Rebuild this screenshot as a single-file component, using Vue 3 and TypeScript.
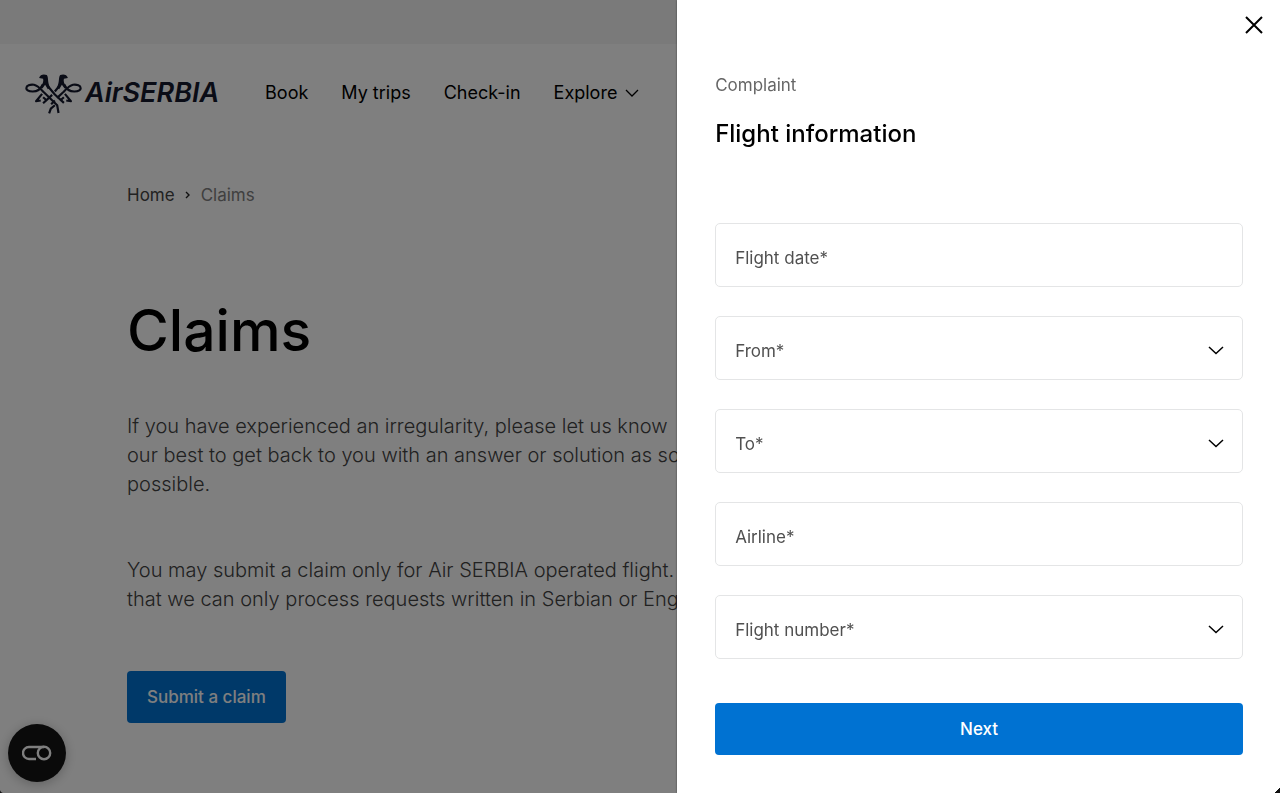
<script setup lang="ts">
import { ref } from 'vue'

interface Field {
  id: string
  label: string
  kind: 'text' | 'select'
}

const navItems: string[] = ['Book', 'My trips', 'Check-in']

const fields: Field[] = [
  { id: 'flight-date', label: 'Flight date*', kind: 'text' },
  { id: 'from', label: 'From*', kind: 'select' },
  { id: 'to', label: 'To*', kind: 'select' },
  { id: 'airline', label: 'Airline*', kind: 'text' },
  { id: 'flight-number', label: 'Flight number*', kind: 'select' },
]

const values = ref<Record<string, string>>({})
</script>

<template>
  <div class="page">
    <div class="topbar"></div>
    <header class="header">
      <a href="#" class="logo">
        <svg class="emblem" viewBox="3 9 170 120" aria-hidden="true">
          <g fill="none" stroke="#14182c" stroke-width="6.5" stroke-linejoin="round">
            <path d="M56 42 C50 56 38 63 26 63 C15 62 7 58 7 53 C7 46 18 41 30 43 C42 46 50 56 60 66 L99 104 L103 127" />
            <path d="M120 42 C126 56 138 63 150 63 C161 62 169 58 169 53 C169 46 158 41 146 43 C134 46 126 56 116 66 L99 82 M92 90 L81 101 M92 104 L80 114 L75 128" />
            <path d="M72 48 L92 72 L119 97" />
            <path d="M104 48 L92 63 M84 73 L57 98" />
            <path d="M54 70 L36 92 L50 90 M57 80 L68 90 M122 70 L140 92 L126 90 M119 80 L108 90" />
          </g>
          <g fill="#14182c">
            <path d="M45 23 C48 12 59 10 68 14 C74 21 69 34 78 52 L71 56 L63 43 L55 54 L49 49 C56 40 59 34 57 25 Z" />
            <path d="M131 23 C128 12 117 10 108 14 C102 21 107 34 98 52 L105 56 L113 43 L121 54 L127 49 C120 40 117 34 119 25 Z" />
          </g>
        </svg>
        <span class="wordmark">AirSERBIA</span>
      </a>
      <nav class="nav">
        <a v-for="item in navItems" :key="item" href="#">{{ item }}</a>
        <button type="button" class="explore">
          Explore
          <svg width="14" height="8" viewBox="0 0 14 8" aria-hidden="true">
            <path d="M1 1 L7 7 L13 1" fill="none" stroke="currentColor" stroke-width="1.3" />
          </svg>
        </button>
      </nav>
    </header>

    <main class="content">
      <nav class="crumbs" aria-label="Breadcrumb">
        <a href="#">Home</a>
        <svg width="6" height="8" viewBox="0 0 6 8" aria-hidden="true">
          <path d="M1 1 L4 4 L1 7" fill="none" stroke="#222" stroke-width="1.4" />
        </svg>
        <span>Claims</span>
      </nav>
      <h1>Claims</h1>
      <p>
        If you have experienced an irregularity, please let us know<br />
        our best to get back to you with an answer or solution as soon<br />
        possible.
      </p>
      <p>
        You may submit a claim only for Air SERBIA operated flight.<br />
        that we can only process requests written in Serbian or English
      </p>
      <button type="button" class="submit">Submit a claim</button>
    </main>

    <button type="button" class="consent" aria-label="Cookie settings">
      <svg width="30" height="16" viewBox="0 0 30 16" aria-hidden="true">
        <path d="M14 14 H7 A6 6 0 0 1 7 2 H22" fill="none" stroke="#fff" stroke-width="2.4" />
        <circle cx="22" cy="8" r="6.2" fill="none" stroke="#fff" stroke-width="2.4" />
      </svg>
    </button>
  </div>

  <div class="overlay"></div>

  <aside class="drawer" role="dialog" aria-labelledby="drawer-title">
    <button type="button" class="close" aria-label="Close">
      <svg width="18" height="18" viewBox="0 0 18 18" aria-hidden="true">
        <path d="M1 1 L17 17 M17 1 L1 17" stroke="#000" stroke-width="2" />
      </svg>
    </button>
    <div class="eyebrow">Complaint</div>
    <h2 id="drawer-title">Flight information</h2>
    <form @submit.prevent>
      <div v-for="field in fields" :key="field.id" class="field">
        <label :for="field.id">{{ field.label }}</label>
        <input v-if="field.kind === 'text'" :id="field.id" v-model="values[field.id]" type="text" />
        <template v-else>
          <select :id="field.id" v-model="values[field.id]"></select>
          <svg class="chevron" width="16" height="9" viewBox="0 0 16 9" aria-hidden="true">
            <path d="M1 1 L8 7.5 L15 1" fill="none" stroke="#000" stroke-width="1.5" />
          </svg>
        </template>
      </div>
      <button type="submit" class="next">Next</button>
    </form>
  </aside>
  <i class="corner corner-left"></i>
  <i class="corner corner-right"></i>
</template>

<style>
body {
  margin: 0;
  overflow: hidden;
  font-family: Inter, 'Liberation Sans', sans-serif;
}
</style>

<style scoped>
* {
  box-sizing: border-box;
}

button,
input,
select {
  font: inherit;
  border: 0;
  margin: 0;
  padding: 0;
}

button {
  cursor: pointer;
}

a {
  color: inherit;
  text-decoration: none;
}

.page {
  min-height: 100vh;
  background: #fff;
}

.topbar {
  height: 44px;
  background: #f4f5f5;
}

.header {
  display: flex;
  align-items: center;
  gap: 46px;
  height: 98px;
  padding-left: 25px;
}

.logo {
  display: flex;
  align-items: center;
  gap: 3px;
  color: #14182c;
}

.emblem {
  width: 57px;
  height: 41px;
}

.wordmark {
  font-size: 27px;
  line-height: 32px;
  font-style: italic;
  font-weight: 600;
}

.nav {
  display: flex;
  gap: 33px;
  font-size: 18px;
  line-height: 24px;
  font-weight: 400;
  color: #000;
}

.explore {
  display: flex;
  align-items: center;
  gap: 8px;
  background: none;
  color: inherit;
}

.content {
  padding: 41px 0 0 127px;
  white-space: nowrap;
}

.crumbs {
  display: flex;
  align-items: center;
  gap: 10px;
  font-size: 17px;
  line-height: 24px;
  color: #444;
}

.crumbs span {
  color: #808080;
}

h1 {
  margin: 88px 0 45px;
  font-size: 57px;
  line-height: 72px;
  font-weight: 500;
}

p {
  margin: 0 0 57px;
  font-size: 20px;
  line-height: 29px;
  font-weight: 300;
  color: #424242;
}

.submit {
  display: block;
  height: 52px;
  padding: 0 20px;
  border-radius: 4px;
  background: #0072d2;
  color: #fff;
  font-size: 17px;
  font-weight: 500;
}

.consent {
  position: fixed;
  left: 8px;
  bottom: 11px;
  display: grid;
  place-items: center;
  width: 58px;
  height: 58px;
  border-radius: 50%;
  background: #141414;
  box-shadow: 0 2px 12px rgba(0, 0, 0, 0.25);
}

.overlay {
  position: fixed;
  inset: 0;
  background: rgba(0, 0, 0, 0.5);
}

.drawer {
  position: fixed;
  top: 0;
  right: 0;
  bottom: 0;
  width: 47.1%;
  padding: 73px 37px 37px 38px;
  background: #fff;
  overflow: hidden;
  box-shadow: 0 0 2px rgba(0, 0, 0, 0.5);
}

.close {
  position: absolute;
  top: 9px;
  right: 10px;
  display: grid;
  place-items: center;
  width: 32px;
  height: 32px;
  background: none;
}

.eyebrow {
  font-size: 17px;
  line-height: 24px;
  color: #666;
}

h2 {
  margin: 21px 0 73px;
  font-size: 24px;
  line-height: 32px;
  font-weight: 500;
}

form {
  display: grid;
  gap: 29px;
}

.field {
  display: grid;
  grid-template-columns: 1fr 16px;
  align-items: center;
  height: 64px;
  padding: 0 18px 0 19px;
  border: 1px solid #e4e5e6;
  border-radius: 5px;
}

.field label,
.field input,
.field select {
  grid-row: 1;
  grid-column: 1 / 3;
}

.field label {
  padding-top: 5px;
  font-size: 17px;
  line-height: 24px;
  color: #505050;
  pointer-events: none;
}

.field input,
.field select {
  width: 100%;
  height: 62px;
  background: transparent;
  outline: 0;
  appearance: none;
}

.chevron {
  grid-row: 1;
  grid-column: 2;
  margin-top: 4px;
  pointer-events: none;
}

.next {
  height: 52px;
  margin-top: 15px;
  border-radius: 4px;
  background: #0072d2;
  color: #fff;
  font-size: 17px;
  font-weight: 500;
}

.corner {
  position: fixed;
  bottom: 0;
  width: 5px;
  height: 5px;
}

.corner-left {
  left: 0;
  background: radial-gradient(circle at 100% 0, transparent 5px, #111 6px);
}

.corner-right {
  right: 0;
  background: linear-gradient(135deg, transparent 50%, #111 50%);
}
</style>
